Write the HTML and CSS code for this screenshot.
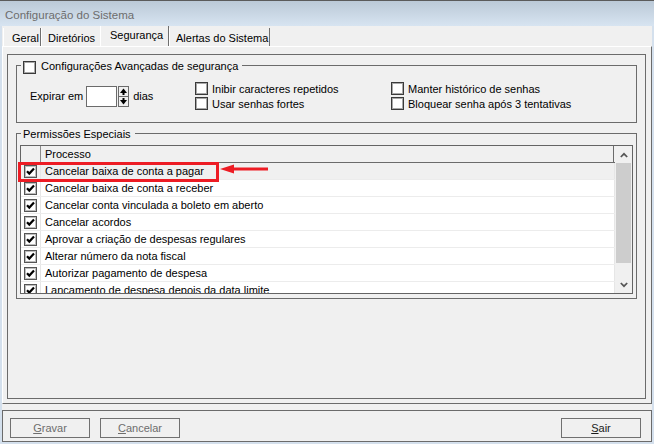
FILE: index.html
```html
<!DOCTYPE html>
<html>
<head>
<meta charset="utf-8">
<title>Configuração do Sistema</title>
<link rel="stylesheet" href="styles.css">
</head>
<body>
<div class="window">
  <div class="titlebar">Configuração do Sistema</div>
  <div class="client">
    <div class="tabstrip">
      <div class="tab t1">Geral</div>
      <div class="tab t2">Diretórios</div>
      <div class="tab t3 active">Segurança</div>
      <div class="tab t4">Alertas do Sistema</div>
    </div>
    <div class="tabctrl">
      <div class="page">
        <div class="group g1">
          <div class="caption cap1"><span class="cb"></span><span>Configurações Avançadas de segurança</span></div>
          <div class="g1-body">
            <div class="expire">
              <span>Expirar em</span>
              <span class="edit"></span>
              <svg class="spin" width="11" height="21" viewBox="0 0 11 21">
                <rect x="0.5" y="0.5" width="10" height="20" fill="#f0f0f0" stroke="#6b6b6b"/>
                <line x1="0" y1="10.5" x2="11" y2="10.5" stroke="#6b6b6b"/>
                <polygon points="2,7 9,7 5.5,2.5" fill="#000"/>
                <rect x="4.5" y="7" width="2" height="2" fill="#000"/>
                <rect x="4.5" y="12" width="2" height="2" fill="#000"/>
                <polygon points="2,14 9,14 5.5,18.5" fill="#000"/>
              </svg>
              <span class="dias">dias</span>
            </div>
            <div class="col c1">
              <div class="chk"><span class="cb"></span><span>Inibir caracteres repetidos</span></div>
              <div class="chk"><span class="cb"></span><span>Usar senhas fortes</span></div>
            </div>
            <div class="col c2">
              <div class="chk"><span class="cb"></span><span>Manter histórico de senhas</span></div>
              <div class="chk"><span class="cb"></span><span>Bloquear senha após 3 tentativas</span></div>
            </div>
          </div>
        </div>
        <div class="group g2">
          <div class="caption cap2">Permissões Especiais</div>
          <div class="grid">
            <div class="table">
              <div class="thead"><div class="c-chk"></div><div class="c-txt">Processo</div></div>
              <div class="row sel"><div class="c-chk"><span class="cb on"><svg width="11" height="11" viewBox="0 0 11 11"><path d="M2 5.2 L4.3 7.6 L9 2.6" fill="none" stroke="#000" stroke-width="2.2"/></svg></span></div><div class="c-txt">Cancelar baixa de conta a pagar</div></div>
              <div class="row"><div class="c-chk"><span class="cb on"><svg width="11" height="11" viewBox="0 0 11 11"><path d="M2 5.2 L4.3 7.6 L9 2.6" fill="none" stroke="#000" stroke-width="2.2"/></svg></span></div><div class="c-txt">Cancelar baixa de conta a receber</div></div>
              <div class="row"><div class="c-chk"><span class="cb on"><svg width="11" height="11" viewBox="0 0 11 11"><path d="M2 5.2 L4.3 7.6 L9 2.6" fill="none" stroke="#000" stroke-width="2.2"/></svg></span></div><div class="c-txt">Cancelar conta vinculada a boleto em aberto</div></div>
              <div class="row"><div class="c-chk"><span class="cb on"><svg width="11" height="11" viewBox="0 0 11 11"><path d="M2 5.2 L4.3 7.6 L9 2.6" fill="none" stroke="#000" stroke-width="2.2"/></svg></span></div><div class="c-txt">Cancelar acordos</div></div>
              <div class="row"><div class="c-chk"><span class="cb on"><svg width="11" height="11" viewBox="0 0 11 11"><path d="M2 5.2 L4.3 7.6 L9 2.6" fill="none" stroke="#000" stroke-width="2.2"/></svg></span></div><div class="c-txt">Aprovar a criação de despesas regulares</div></div>
              <div class="row"><div class="c-chk"><span class="cb on"><svg width="11" height="11" viewBox="0 0 11 11"><path d="M2 5.2 L4.3 7.6 L9 2.6" fill="none" stroke="#000" stroke-width="2.2"/></svg></span></div><div class="c-txt">Alterar número da nota fiscal</div></div>
              <div class="row"><div class="c-chk"><span class="cb on"><svg width="11" height="11" viewBox="0 0 11 11"><path d="M2 5.2 L4.3 7.6 L9 2.6" fill="none" stroke="#000" stroke-width="2.2"/></svg></span></div><div class="c-txt">Autorizar pagamento de despesa</div></div>
              <div class="row"><div class="c-chk"><span class="cb on"><svg width="11" height="11" viewBox="0 0 11 11"><path d="M2 5.2 L4.3 7.6 L9 2.6" fill="none" stroke="#000" stroke-width="2.2"/></svg></span></div><div class="c-txt">Lancamento de despesa depois da data limite</div></div>
            </div>
            <div class="vscroll">
              <div class="sb-btn"><svg width="8" height="6" viewBox="0 0 8 6"><polyline points="0.8,5 4,1.8 7.2,5" fill="none" stroke="#555" stroke-width="1.7"/></svg></div>
              <div class="sb-track"><div class="sb-thumb"></div></div>
              <div class="sb-btn"><svg width="8" height="6" viewBox="0 0 8 6"><polyline points="0.8,1 4,4.2 7.2,1" fill="none" stroke="#555" stroke-width="1.7"/></svg></div>
            </div>
          </div>
        </div>
      </div>
    </div>
    <div class="btnbar">
      <div class="btn dis"><span><u>G</u>ravar</span></div>
      <div class="btn dis b2"><span><u>C</u>ancelar</span></div>
      <div class="btn sair"><span><u>S</u>air</span></div>
    </div>
  </div>
  <div class="highlight"></div>
  <svg class="arrow" width="50" height="12" viewBox="0 0 50 12">
    <polygon points="0,6 14,1.5 14,10.5" fill="#ed1c24"/>
    <rect x="12" y="4.5" width="36" height="3" fill="#ed1c24"/>
  </svg>
</div>
</body>
</html>
```

FILE: styles.css
```css
* { box-sizing: border-box; }
html, body { margin: 0; padding: 0; }
body {
  width: 654px;
  height: 444px;
  overflow: hidden;
  background: #d6e2ee;
  font-family: "Liberation Sans", Arial, sans-serif;
  font-size: 11px;
  color: #000;
}
.window {
  position: relative;
  width: 654px;
  height: 444px;
  display: flex;
  flex-direction: column;
  background: #d4e0ed;
  border-top: 1px solid #5b5b5b;
}
.titlebar {
  height: 25px;
  flex: none;
  background: linear-gradient(#bbc9d7, #d7e4f1);
  color: #6d6d6d;
  font-size: 11.5px;
  padding: 2px 0 0 5px;
  display: flex;
  align-items: center;
}
.client {
  flex: 1;
  margin: 0 2px 2px;
  background: #f0f0f0;
  display: flex;
  flex-direction: column;
}
.tabstrip {
  height: 20px;
  flex: none;
  display: flex;
  padding-left: 1px;
}
.tab {
  height: 18px;
  margin-top: 2px;
  border-left: 1px solid #fff;
  border-right: 1px solid #6f6f6f;
  display: flex;
  align-items: center;
  padding-top: 2px;
  white-space: nowrap;
}
.t1 { width: 38px; padding-left: 8px; }
.t2 { width: 59px; padding-left: 6px; border-right-color: transparent; }
.t3 { width: 69px; padding-left: 9px; }
.t4 { width: 101px; padding-left: 6px; }
.tab.active {
  height: 20px;
  margin-top: 0;
  padding-top: 0;
  padding-bottom: 2px;
}
.tabctrl {
  height: 358px;
  flex: none;
  border: 1px solid;
  border-color: #fff #6b6b6b #6b6b6b #fff;
  padding: 7px 5px 0 4px;
}
.page {
  height: 345px;
  border: 1px solid #6b6b6b;
  padding: 0 8px;
}
.group {
  border: 1px solid #6b6b6b;
}
.g1 {
  margin-top: 10px;
  height: 58px;
}
.g2 {
  margin-top: 10px;
  height: 166px;
}
.caption {
  display: flex;
  align-items: center;
  height: 14px;
  margin: -7px 0 0 4px;
  padding: 0 4px 0 2px;
  background: #f0f0f0;
  width: max-content;
  gap: 5px;
}
.cb {
  width: 13px;
  height: 13px;
  flex: none;
  border: 1px solid #3a3a3a;
  box-shadow: inset 0 0 0 1px #a8a8a8;
  background: #fff;
  display: flex;
  align-items: center;
  justify-content: center;
}
.cap1 .cb { margin-top: 2px; }
.cb.on {
  border-color: #555;
  box-shadow: inset 0 0 0 1px #bdbdbd;
}
.g1-body {
  display: flex;
  align-items: center;
  margin-top: 8px;
  padding-left: 13px;
}
.expire {
  width: 165px;
  display: flex;
  align-items: center;
}
.edit {
  width: 31px;
  height: 21px;
  margin-left: 3px;
  border: 1px solid #6b6b6b;
  background: #fff;
}
.spin {
  margin-left: 1px;
  display: block;
}
.dias { margin-left: 4px; }
.col {
  display: flex;
  flex-direction: column;
}
.c1 { width: 196px; }
.chk {
  display: flex;
  align-items: center;
  height: 15px;
  gap: 4px;
  white-space: nowrap;
}
.grid {
  margin: 4px 3px 0;
  height: 149px;
  border: 1px solid #646464;
  display: flex;
  background: #fff;
}
.table {
  width: 594px;
  overflow: hidden;
}
.thead {
  display: flex;
  height: 17px;
  background: #f0f0f0;
  border-bottom: 1px solid #6b6b6b;
}
.thead .c-chk {
  width: 20px;
  border-right: 1px solid #8a8a8a;
}
.thead .c-txt {
  flex: 1;
  margin-right: 1px;
  border-right: 1px solid #6b6b6b;
  padding-left: 4px;
  display: flex;
  align-items: center;
}
.row {
  display: flex;
  height: 17px;
  flex: none;
  border-bottom: 1px solid #ececec;
}
.row.sel { background: #f0f0f0; }
.row .c-chk {
  width: 20px;
  border-right: 1px solid #e6e6e6;
  display: flex;
  align-items: center;
  justify-content: center;
}
.row .c-txt {
  flex: 1;
  padding-left: 4px;
  display: flex;
  align-items: center;
  border-right: 1px solid #e6e6e6;
  white-space: nowrap;
}
.vscroll {
  width: 17px;
  background: #f0f0f0;
  display: flex;
  flex-direction: column;
}
.sb-btn {
  height: 17px;
  flex: none;
  display: flex;
  align-items: center;
  justify-content: center;
}
.sb-track {
  flex: 1;
  padding: 0 1px;
}
.sb-thumb {
  height: 100px;
  background: #cdcdcd;
}
.btnbar {
  margin-top: 6px;
  height: 32px;
  flex: none;
  border: 1px solid #6b6b6b;
  display: flex;
  align-items: flex-start;
  padding: 7px 10px 0 7px;
}
.btn {
  width: 80px;
  height: 20px;
  border: 1px solid #707070;
  background: #f0f0f0;
  display: flex;
  align-items: center;
  justify-content: center;
  color: #1a1a1a;
}
.btn.dis { color: #6d6d6d; }
.b2 { margin-left: 10px; }
.sair { margin-left: auto; }
.highlight {
  position: absolute;
  left: 18px;
  top: 161px;
  width: 201px;
  height: 20px;
  border: 3px solid #ed1c24;
}
.arrow {
  position: absolute;
  left: 220px;
  top: 162px;
}
```
